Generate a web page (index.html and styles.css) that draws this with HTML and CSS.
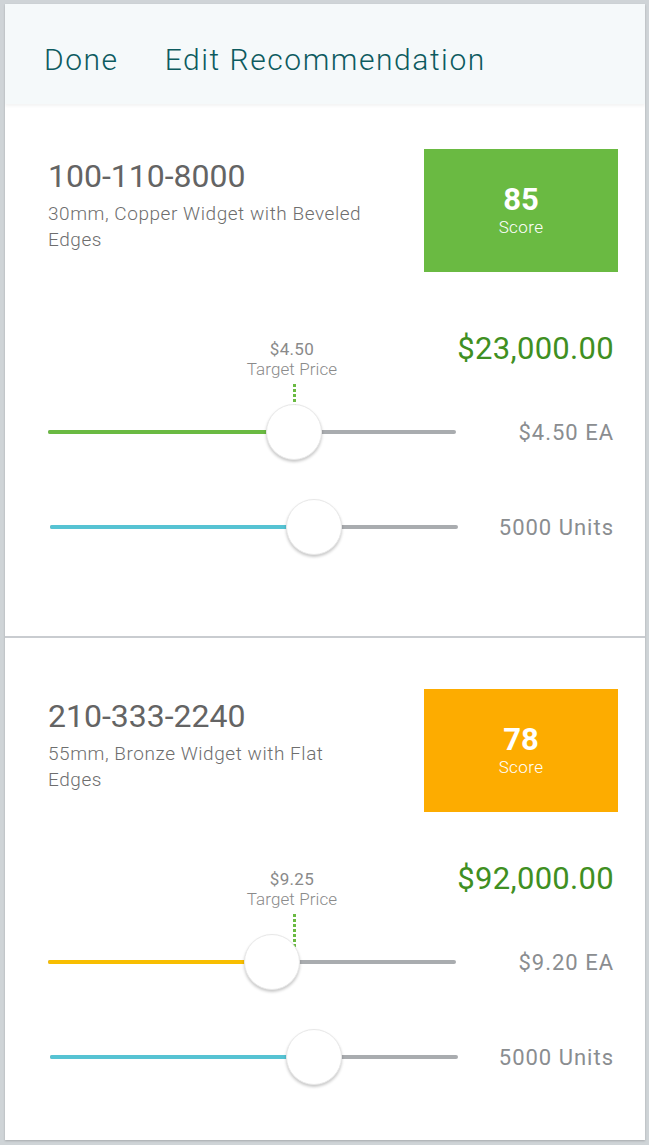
FILE: index.html
```html
<!DOCTYPE html>
<html>
<head>
<meta charset="utf-8">
<link rel="stylesheet" href="styles.css">
</head>
<body>
<div class="app">
  <header class="header">
    <span class="header-done">Done</span>
    <span class="header-title">Edit Recommendation</span>
  </header>

  <section class="card card-first">
    <div class="card-top">
      <div class="info">
        <div class="part">100-110-8000</div>
        <div class="desc">30mm, Copper Widget with Beveled Edges</div>
      </div>
      <div class="score score-green">
        <div class="score-num">85</div>
        <div class="score-label">Score</div>
      </div>
    </div>
    <div class="pricing">
      <div class="total">$23,000.00</div>
      <div class="slider-row">
        <div class="slider">
          <div class="track"></div>
          <div class="fill fill-green" style="width:60.3%"></div>
          <div class="target" style="left:59.8%">
            <div class="target-text">
              <div class="target-price">$4.50</div>
              <div class="target-label">Target Price</div>
            </div>
            <div class="target-line"></div>
          </div>
          <div class="thumb" style="left:60.3%"></div>
        </div>
        <div class="value">$4.50 EA</div>
      </div>
      <div class="slider-row slider-row-qty">
        <div class="slider">
          <div class="track"></div>
          <div class="fill fill-cyan" style="width:64.7%"></div>
          <div class="thumb" style="left:64.7%"></div>
        </div>
        <div class="value">5000 Units</div>
      </div>
    </div>
  </section>

  <section class="card card-second">
    <div class="card-top">
      <div class="info">
        <div class="part">210-333-2240</div>
        <div class="desc">55mm, Bronze Widget with Flat Edges</div>
      </div>
      <div class="score score-orange">
        <div class="score-num">78</div>
        <div class="score-label">Score</div>
      </div>
    </div>
    <div class="pricing">
      <div class="total">$92,000.00</div>
      <div class="slider-row">
        <div class="slider">
          <div class="track"></div>
          <div class="fill fill-yellow" style="width:54.9%"></div>
          <div class="target" style="left:59.8%">
            <div class="target-text">
              <div class="target-price">$9.25</div>
              <div class="target-label">Target Price</div>
            </div>
            <div class="target-line"></div>
          </div>
          <div class="thumb" style="left:54.9%"></div>
        </div>
        <div class="value">$9.20 EA</div>
      </div>
      <div class="slider-row slider-row-qty">
        <div class="slider">
          <div class="track"></div>
          <div class="fill fill-cyan" style="width:64.7%"></div>
          <div class="thumb" style="left:64.7%"></div>
        </div>
        <div class="value">5000 Units</div>
      </div>
    </div>
  </section>
</div>
</body>
</html>
```

FILE: styles.css
```css
* { box-sizing: border-box; }

html, body {
  margin: 0;
  padding: 0;
  background: #cfd4d7;
  font-family: Roboto, "Liberation Sans", sans-serif;
}

body {
  padding: 4px 4px 5px 5px;
}

.app {
  background: #ffffff;
  height: 1136px;
  box-shadow: 0 1px 2px rgba(0, 0, 0, 0.2);
  overflow: hidden;
}

.header {
  height: 100px;
  background: #f5f9fa;
  padding: 38px 0 0 39px;
  display: flex;
  align-items: flex-start;
  gap: 46px;
  color: #0d5b5f;
  font-size: 30px;
  line-height: 36px;
  font-weight: 300;
  letter-spacing: 1.55px;
  position: relative;
  box-shadow: 0 2px 3px rgba(0, 0, 0, 0.05);
}

.card {
  padding: 45px 27px 81px 43px;
}

.card-first {
  border-bottom: 2px solid #c9ccd0;
}

.card-second {
  padding-top: 51px;
  padding-bottom: 56px;
}

.card-top {
  display: flex;
  align-items: flex-start;
}

.info {
  flex: 1;
  padding-top: 8px;
  padding-right: 40px;
}

.part {
  font-size: 32px;
  line-height: 38px;
  color: #646464;
}

.desc {
  margin-top: 6px;
  max-width: 320px;
  font-size: 19px;
  line-height: 26px;
  letter-spacing: 0.55px;
  font-weight: 300;
  color: #6e6e6e;
}

.score {
  width: 194px;
  height: 123px;
  flex: none;
  color: #fff;
  text-align: center;
  padding-top: 34px;
}

.score-green { background: #6aba42; }
.score-orange { background: #fdac00; }

.score-num {
  font-size: 31px;
  line-height: 34px;
  font-weight: 700;
}

.score-label {
  font-size: 17px;
  line-height: 21px;
  letter-spacing: 0.4px;
  font-weight: 300;
}

.pricing {
  margin-top: 60px;
}

.card-second .pricing {
  margin-top: 50px;
}

.total {
  text-align: right;
  padding-right: 4px;
  font-size: 31px;
  line-height: 34px;
  letter-spacing: 0.3px;
  color: #3f8f22;
}

.slider-row {
  display: grid;
  grid-template-columns: 408px 1fr;
  align-items: center;
  height: 56px;
  margin-top: 38px;
}

.slider-row-qty {
  margin-top: 39px;
  padding-left: 2px;
}

.slider {
  position: relative;
  height: 56px;
}

.track {
  position: absolute;
  left: 0;
  right: 0;
  top: 26px;
  height: 4px;
  border-radius: 2px;
  background: #a9acaf;
}

.fill {
  position: absolute;
  left: 0;
  top: 26px;
  height: 4px;
  border-radius: 2px 0 0 2px;
}

.fill-green { background: #6aba42; }
.fill-cyan { background: #56c3d3; }
.fill-yellow { background: #f8be00; }

.thumb {
  position: absolute;
  top: 0;
  width: 56px;
  height: 56px;
  margin-left: -28px;
  border-radius: 50%;
  background: #fff;
  border: 1px solid #e8e8e8;
  box-shadow: 0 2px 3px rgba(0, 0, 0, 0.22);
  z-index: 2;
}

.target {
  position: absolute;
  bottom: 28px;
  width: 0;
  display: flex;
  flex-direction: column;
  align-items: center;
  z-index: 1;
}

.target-text {
  width: 120px;
  text-align: center;
  color: #8a8a8a;
  font-size: 17px;
  line-height: 20px;
  font-weight: 300;
}

.target-price {
  font-weight: 400;
  font-size: 17px;
  letter-spacing: 0.3px;
}

.target-label {
  letter-spacing: 0.1px;
}

.target-line {
  width: 3px;
  height: 48px;
  margin-top: 5px;
  margin-left: 6px;
  background: repeating-linear-gradient(to bottom, #6aba42 0 3px, transparent 3px 5px);
}

.value {
  text-align: right;
  padding-right: 4px;
  font-size: 22px;
  letter-spacing: 1px;
  color: #8a8d90;
}
```
